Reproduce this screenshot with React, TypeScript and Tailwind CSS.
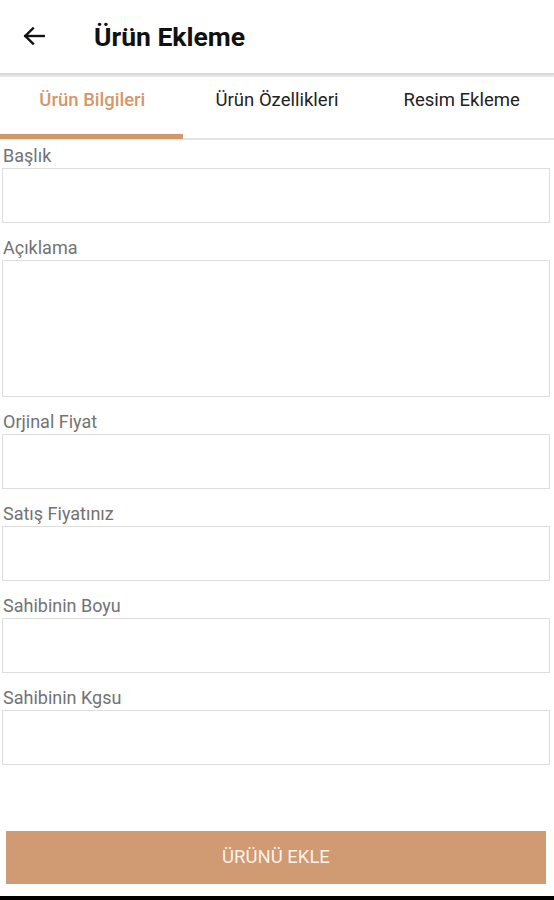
import React from 'react';

const fields: { label: string; tall?: boolean }[] = [
  { label: 'Başlık' },
  { label: 'Açıklama', tall: true },
  { label: 'Orjinal Fiyat' },
  { label: 'Satış Fiyatınız' },
  { label: 'Sahibinin Boyu' },
  { label: 'Sahibinin Kgsu' },
];

const tabs = ['Ürün Bilgileri', 'Ürün Özellikleri', 'Resim Ekleme'];

export default function App() {
  return (
    <div className="w-[554px] h-[900px] bg-white flex flex-col font-['Roboto','Liberation_Sans',sans-serif] overflow-hidden">
      <header className="h-[73px] flex items-center">
        <svg className="ml-[21px] -mt-[2px]" width="26" height="26" viewBox="0 0 24 24" fill="none" stroke="#111" strokeWidth="2.2" strokeLinecap="square">
          <path d="M21 12H4" />
          <path d="M11 5l-7 7 7 7" />
        </svg>
        <h1 className="ml-[47px] text-[26.5px] font-bold text-[#111]">Ürün Ekleme</h1>
      </header>
      <div className="h-[4px] bg-gradient-to-b from-[#d4d4d4] to-[#eeeeee]" />

      <nav className="flex h-[63px] border-b-2 border-[#e4e4e4]">
        {tabs.map((t, i) => (
          <div key={t} className="flex-1 relative flex items-center justify-center pb-[13px]">
            <span className={i === 0 ? 'text-[18.5px] font-medium text-[#d4976a]' : 'text-[18.5px] text-[#222]'}>{t}</span>
            {i === 0 && <div className="absolute left-0 right-[2px] -bottom-[1px] h-[5px] bg-[#d4976a]" />}
          </div>
        ))}
      </nav>

      <form className="flex flex-col gap-[14px] pt-[5px] pl-[2px] pr-[4px]">
        {fields.map((f) => (
          <div key={f.label} className="flex flex-col gap-[1px]">
            <label className="pl-[1px] text-[18px] leading-[22px] text-[#737373]">{f.label}</label>
            <div className={(f.tall ? 'h-[137px]' : 'h-[55px]') + ' border-[1.5px] border-[#dedede] bg-white'} />
          </div>
        ))}
      </form>

      <div className="flex-1" />

      <button className="ml-[6px] w-[540px] mb-[12px] h-[53px] bg-[#d09a73] text-[18.5px] text-[#fdf2ea]">
        ÜRÜNÜ EKLE
      </button>
      <div className="h-[4px] bg-black" />
    </div>
  );
}
